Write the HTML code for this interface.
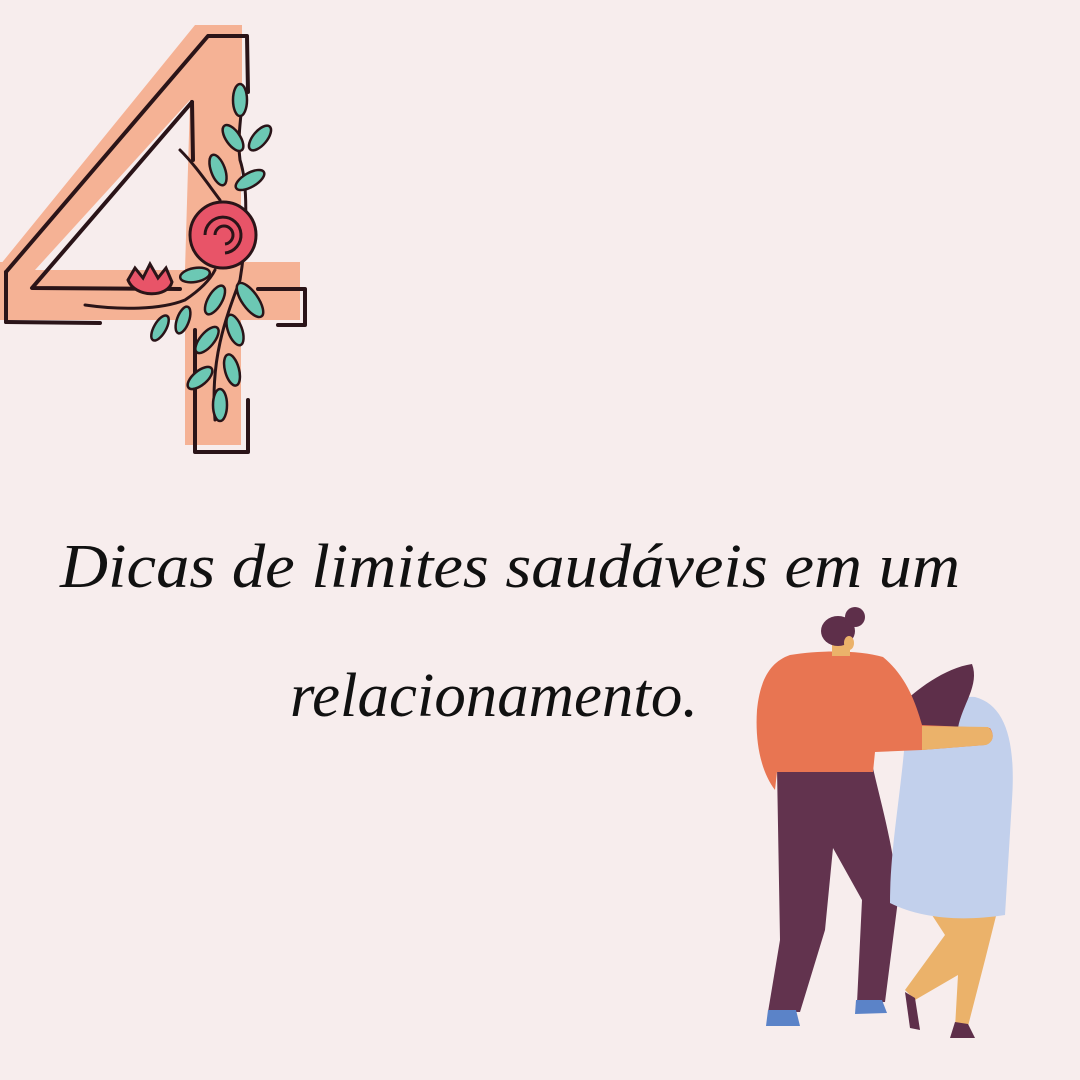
<!DOCTYPE html>
<html><head><meta charset="utf-8"><style>
html,body{margin:0;padding:0;background:#f7eded;}
svg{display:block}
</style></head><body>
<svg width="1080" height="1080" viewBox="0 0 1080 1080" xmlns="http://www.w3.org/2000/svg">
<rect width="1080" height="1080" fill="#f7eded"/>
<g fill="#f5b295">
<polygon points="0,265 195,25 242,25 242,90 190,90 190,100 40,270 0,275"/>
<rect x="185" y="90" width="56" height="355"/>
<rect x="0" y="262" width="300" height="58"/>
</g>
<polygon points="190,100 35,270 185,270" fill="#f7eded"/>
<g fill="none" stroke="#2a1418" stroke-width="4" stroke-linecap="round" stroke-linejoin="round">
<polyline points="6,322 100,323"/>
<polyline points="6,272 6,322"/>
<polyline points="6,272 208,36 247,36 248,92"/>
<polyline points="192,102 32,288 180,289"/>
<polyline points="192,102 193,160"/>
<polyline points="258,289 305,289 305,325 278,325"/>
<polyline points="248,400 248,452 195,452 195,330"/>
</g>
<g stroke="#2a1418" stroke-width="3" fill="none" stroke-linecap="round">
<path d="M215,420 C210,360 225,320 240,280 C245,250 250,190 240,160 C236,130 245,110 240,85"/>
<path d="M85,305 C120,310 160,310 185,300 C200,290 210,280 215,270"/>
<path d="M180,150 C195,165 205,180 220,200"/>
</g>
<g fill="#6cc8b4" stroke="#2a1418" stroke-width="2.5">
<ellipse cx="240" cy="100" rx="7" ry="16"/>
<ellipse cx="233" cy="138" rx="7" ry="15" transform="rotate(-35 233 138)"/>
<ellipse cx="260" cy="138" rx="7" ry="15" transform="rotate(40 260 138)"/>
<ellipse cx="218" cy="170" rx="7" ry="16" transform="rotate(-20 218 170)"/>
<ellipse cx="250" cy="180" rx="7" ry="16" transform="rotate(60 250 180)"/>
<ellipse cx="195" cy="275" rx="7" ry="15" transform="rotate(80 195 275)"/>
<ellipse cx="250" cy="300" rx="8" ry="20" transform="rotate(-35 250 300)"/>
<ellipse cx="215" cy="300" rx="7" ry="16" transform="rotate(30 215 300)"/>
<ellipse cx="235" cy="330" rx="7" ry="16" transform="rotate(-20 235 330)"/>
<ellipse cx="207" cy="340" rx="7" ry="16" transform="rotate(40 207 340)"/>
<ellipse cx="232" cy="370" rx="7" ry="16" transform="rotate(-15 232 370)"/>
<ellipse cx="200" cy="378" rx="7" ry="15" transform="rotate(50 200 378)"/>
<ellipse cx="220" cy="405" rx="7" ry="16"/>
<ellipse cx="160" cy="328" rx="6" ry="14" transform="rotate(30 160 328)"/>
<ellipse cx="183" cy="320" rx="6" ry="14" transform="rotate(20 183 320)"/>
</g>
<g stroke="#2a1418" stroke-width="3">
<circle cx="223" cy="235" r="33" fill="#e85468"/>
<path d="M205,235 a18,18 0 1 1 20,18 M215,235 a9,9 0 1 1 10,9" fill="none"/>
<path d="M128,280 L135,268 L143,278 L150,264 L158,278 L166,268 L172,282 C168,298 135,298 128,280Z" fill="#e85468"/>
</g>
<g font-family="'Liberation Serif', serif" font-style="italic" fill="#111">
<text x="60" y="587" font-size="62" textLength="900" lengthAdjust="spacingAndGlyphs">Dicas de limites saudáveis em um</text>
<text x="290" y="716" font-size="62" textLength="408" lengthAdjust="spacingAndGlyphs">relacionamento.</text>
</g>
<path d="M930,912 L997,912 L985,960 L967,1030 L955,1028 L958,975 L915,1000 L905,990 L945,935Z" fill="#ebb26a"/>
<path d="M905,992 L915,998 L920,1030 L910,1028Z" fill="#5e2f4a"/>
<path d="M955,1022 L968,1024 L975,1038 L950,1038Z" fill="#5e2f4a"/>
<path d="M777,768 L873,768 C880,800 895,850 898,900 L885,1002 L857,1003 L862,900 L833,848 L825,930 L800,1012 L768,1012 L780,940 Z" fill="#62334e"/>
<path d="M768,1010 L796,1010 L800,1026 L766,1026Z" fill="#5b83c8"/>
<path d="M856,1000 L882,1000 L887,1013 L855,1014Z" fill="#5b83c8"/>
<path d="M905,740 C920,710 950,695 975,697 C1005,705 1016,740 1012,800 L1005,915 C960,922 920,918 890,903 C890,850 900,800 905,740Z" fill="#c2d0ec"/>
<path d="M898,708 C915,690 945,668 972,664 C980,685 962,705 958,728 C940,730 920,728 905,720Z" fill="#5e2f4a"/>
<path d="M790,655 C820,650 860,650 883,657 C905,675 915,700 922,725 L990,728 C995,735 993,743 985,745 L922,750 L875,752 L873,772 L777,772 L775,790 C760,770 755,740 757,710 C760,680 770,662 790,655Z" fill="#e87552"/>
<path d="M922,726 L988,727 C995,733 994,742 986,745 L922,750Z" fill="#ebb26a"/>
<rect x="832" y="636" width="18" height="20" fill="#ebb26a"/>
<ellipse cx="838" cy="631" rx="17" ry="15" fill="#5e2f4a"/>
<circle cx="855" cy="617" r="10" fill="#5e2f4a"/>
<ellipse cx="849" cy="643" rx="5" ry="7" fill="#ebb26a"/>
</svg>
</body></html>
